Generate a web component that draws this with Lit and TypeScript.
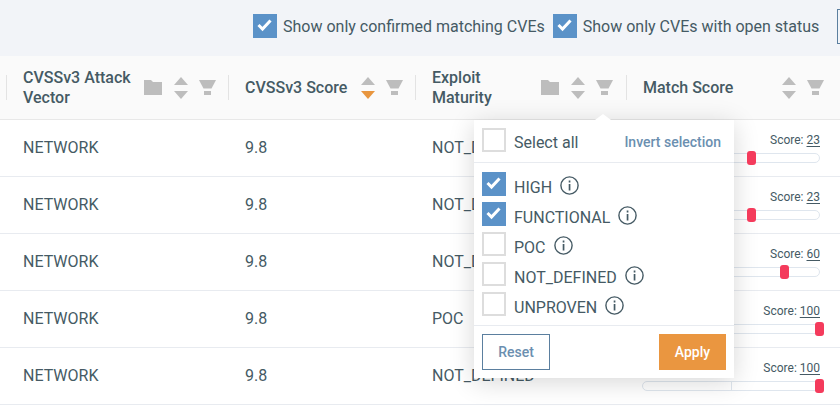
import {LitElement, html, css, svg} from 'lit';
import {customElement} from 'lit/decorators.js';

const check = html`<svg viewBox="0 0 24 24" width="24" height="24">
  <path d="M5.5 11l4 4 8-8.6" fill="none" stroke="#fff" stroke-width="3" />
</svg>`;

const folder = html`<svg class="ic folder" viewBox="0 0 18 15" width="18" height="15">
  <path d="M0 0h7l2 2h9v13H0z" fill="#bdbdbd" />
</svg>`;

const filter = html`<svg class="ic" viewBox="0 0 17 15" width="17" height="15">
  <path d="M0 0h17l-4.5 8.5h-8z" fill="#bdbdbd" />
  <path d="M5 11h7v4H5z" fill="#bdbdbd" />
</svg>`;

const sorter = (active = false) => html`<svg class="ic" viewBox="0 0 14 22" width="14" height="22">
  <path d="M7 0l7 8H0z" fill="#bdbdbd" />
  <path d="M0 14h14l-7 8z" fill=${active ? '#e8963f' : '#bdbdbd'} />
</svg>`;

const info = svg`<circle cx="9.5" cy="9.5" r="8.6" fill="none" stroke="#455a64" stroke-width="1.4" />
  <path d="M8.7 4.6h1.7v1.8H8.7zM8.7 8h1.7v6.6H8.7z" fill="#455a64" />`;

const columns = [
  {title: ['CVSSv3 Attack', 'Vector'], folder: true, sort: false},
  {title: ['CVSSv3 Score'], folder: false, sort: true},
  {title: ['Exploit', 'Maturity'], folder: true, sort: false},
  {title: ['Match Score'], folder: false, sort: false},
];

const rows = [
  {vector: 'NETWORK', score: '9.8', maturity: 'NOT_DEFINED', match: 23, thumb: 0.614},
  {vector: 'NETWORK', score: '9.8', maturity: 'NOT_DEFINED', match: 23, thumb: 0.614},
  {vector: 'NETWORK', score: '9.8', maturity: 'NOT_DEFINED', match: 60, thumb: 0.8},
  {vector: 'NETWORK', score: '9.8', maturity: 'POC', match: 100, thumb: 1},
  {vector: 'NETWORK', score: '9.8', maturity: 'NOT_DEFINED', match: 100, thumb: 1},
];

const options = [
  {label: 'HIGH', checked: true},
  {label: 'FUNCTIONAL', checked: true},
  {label: 'POC', checked: false},
  {label: 'NOT_DEFINED', checked: false},
  {label: 'UNPROVEN', checked: false},
];

@customElement('app-root')
export class AppRoot extends LitElement {
  static styles = css`
    :host {
      display: block;
      position: relative;
      width: 840px;
      height: 414px;
      overflow: hidden;
      background: #fff;
      font-family: Roboto, sans-serif;
      color: #455a64;
    }

    .toolbar {
      height: 56px;
      box-sizing: border-box;
      background: #f2f4f8;
      display: flex;
      align-items: center;
      padding-left: 253px;
      padding-bottom: 4px;
      font-size: 16px;
    }

    .toolbar label {
      display: flex;
      align-items: center;
      gap: 6px;
      margin-right: 8px;
      white-space: nowrap;
    }

    .toolbar .more {
      width: 20px;
      height: 35px;
      margin-left: 10px;
      flex: none;
      box-sizing: border-box;
      border: 1px solid #5b7f9f;
    }

    .box {
      width: 24px;
      height: 24px;
      box-sizing: border-box;
      flex: none;
      border: 2px solid #ddd;
      background: #fff;
    }

    .box.on {
      border: none;
      background: #5b92c8;
    }

    .box svg {
      display: block;
    }

    .grid {
      display: grid;
      grid-template-columns: 6px 222px 187px 211px 210px 4px;
    }

    .head {
      height: 64px;
      background: #fafafa;
      border-bottom: 1px solid #e8e8e8;
      box-sizing: border-box;
      align-items: center;
    }

    .th {
      height: 25px;
      border-left: 1px solid #e3e3e3;
      padding: 0 12px 0 16px;
      display: flex;
      align-items: center;
      font-size: 16px;
      font-weight: 500;
      line-height: 20px;
    }

    .th:nth-child(4) {
      padding-right: 13px;
    }

    .th .name {
      flex: 1;
      white-space: nowrap;
    }

    .th .tools {
      display: flex;
      align-items: center;
      gap: 11px;
    }

    .ic {
      display: block;
    }

    .folder {
      margin-right: 1px;
    }

    .row {
      height: 57px;
      box-sizing: border-box;
      border-bottom: 1px solid #e8ebf0;
      align-items: center;
      font-size: 16px;
    }

    .td {
      padding-left: 17px;
      padding-bottom: 2px;
    }

    .match {
      padding: 0 16px;
    }

    .score {
      text-align: right;
      font-size: 12px;
      line-height: 14px;
      margin-bottom: 6px;
    }

    .score u {
      text-underline-offset: 2px;
    }

    .track {
      position: relative;
      height: 10px;
      box-sizing: border-box;
      border: 1px solid #dfe6ee;
      border-radius: 5px;
    }

    .track::after {
      content: '';
      position: absolute;
      left: 50%;
      top: 0;
      bottom: 0;
      width: 1px;
      background: #dfe6ee;
    }

    .thumb {
      position: absolute;
      top: -3px;
      width: 9px;
      height: 14px;
      margin-left: -4px;
      border-radius: 3px;
      background: #f43b5c;
      z-index: 1;
    }

    .pop {
      position: absolute;
      left: 474px;
      top: 120px;
      width: 260px;
      height: 258px;
      background: #fff;
      box-shadow: 0 4px 24px rgba(0, 0, 0, 0.16);
      font-size: 16px;
    }

    .pop::before {
      content: '';
      position: absolute;
      left: 121px;
      top: -6px;
      border: 8px solid transparent;
      border-top: none;
      border-bottom: 6px solid #fff;
    }

    .all {
      height: 43px;
      box-sizing: border-box;
      border-bottom: 1px solid #e8ebf0;
      padding: 0 13px 2px 8px;
      display: flex;
      align-items: center;
      gap: 8px;
    }

    .all .text {
      flex: 1;
      padding-top: 4px;
    }

    .invert {
      font-size: 14px;
      font-weight: 500;
      color: #6b8fb0;
      padding-top: 4px;
    }

    .list {
      height: 163px;
      box-sizing: border-box;
      padding: 9px 8px 0;
      border-bottom: 1px solid #e8ebf0;
      display: flex;
      flex-direction: column;
      gap: 6px;
    }

    .opt {
      display: flex;
      gap: 8px;
      height: 24px;
      align-items: center;
    }

    .opt .text {
      padding-top: 6px;
    }

    .opt svg.i {
      margin-top: 3px;
      flex: none;
    }

    .actions {
      display: flex;
      justify-content: space-between;
      padding: 8px;
    }

    .btn {
      height: 36px;
      box-sizing: border-box;
      display: flex;
      align-items: center;
      justify-content: center;
      font-size: 14px;
      font-weight: 500;
    }

    .reset {
      width: 68px;
      border: 1px solid #5b7f9f;
      color: #6b8fb0;
    }

    .apply {
      width: 67px;
      background: #ea9640;
      color: #fff;
    }
  `;

  render() {
    return html`
      <div class="toolbar">
        <label><span class="box on">${check}</span><span>Show only confirmed matching CVEs</span></label>
        <label><span class="box on">${check}</span><span>Show only CVEs with open status</span></label>
        <div class="more"></div>
      </div>
      <div class="grid head">
        <div></div>
        ${columns.map(
          (c) => html`<div class="th">
            <div class="name">${c.title.map((t) => html`<div>${t}</div>`)}</div>
            <div class="tools">
              ${c.folder ? folder : ''}${sorter(c.sort)}${filter}
            </div>
          </div>`
        )}
      </div>
      ${rows.map(
        (r) => html`<div class="grid row">
          <div></div>
          <div class="td">${r.vector}</div>
          <div class="td">${r.score}</div>
          <div class="td">${r.maturity}</div>
          <div class="match">
            <div class="score">Score: <u>${r.match}</u></div>
            <div class="track">
              <div class="thumb" style="left: ${r.thumb * 100}%"></div>
            </div>
          </div>
        </div>`
      )}
      <div class="pop">
        <div class="all">
          <span class="box"></span>
          <span class="text">Select all</span>
          <span class="invert">Invert selection</span>
        </div>
        <div class="list">
          ${options.map(
            (o) => html`<div class="opt">
              <span class="box ${o.checked ? 'on' : ''}">${o.checked ? check : ''}</span>
              <span class="text">${o.label}</span>
              <svg class="i" viewBox="0 0 19 19" width="19" height="19">${info}</svg>
            </div>`
          )}
        </div>
        <div class="actions">
          <div class="btn reset">Reset</div>
          <div class="btn apply">Apply</div>
        </div>
      </div>
    `;
  }
}
